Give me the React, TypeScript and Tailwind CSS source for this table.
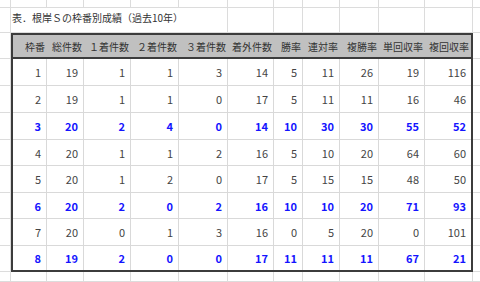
import React from 'react';

const HEADERS = ['枠番', '総件数', '１着件数', '２着件数', '３着件数', '着外件数', '勝率', '連対率', '複勝率', '単回収率', '複回収率'];

const ROWS: { values: number[]; hot: boolean }[] = [
  { values: [1, 19, 1, 1, 3, 14, 5, 11, 26, 19, 116], hot: false },
  { values: [2, 19, 1, 1, 0, 17, 5, 11, 11, 16, 46], hot: false },
  { values: [3, 20, 2, 4, 0, 14, 10, 30, 30, 55, 52], hot: true },
  { values: [4, 20, 1, 1, 2, 16, 5, 10, 20, 64, 60], hot: false },
  { values: [5, 20, 1, 2, 0, 17, 5, 15, 15, 48, 50], hot: false },
  { values: [6, 20, 2, 0, 2, 16, 10, 10, 20, 71, 93], hot: true },
  { values: [7, 20, 0, 1, 3, 16, 0, 5, 20, 0, 101], hot: false },
  { values: [8, 19, 2, 0, 0, 17, 11, 11, 11, 67, 21], hot: true },
];

const COLS = 13;
const GRID_ROWS = 12;

// sheet cells around the table (table covers rows 2..10, cols 1..11)
function SheetCells() {
  const cells: React.ReactElement[] = [];
  for (let r = 0; r < GRID_ROWS; r++) {
    for (let c = 0; c < COLS; c++) {
      if (r >= 2 && r <= 10 && c >= 1 && c <= 11) continue;
      const hideRight = (r === 1 && c >= 1 && c <= 4) || c === COLS - 1;
      const key = `${r}-${c}`;
      if (r === 1 && c === 1) {
        cells.push(
          <div key={key} className="relative flex items-center pb-[6px] pl-px border-b border-[#dcdcdc]">
            <span className="whitespace-nowrap text-[10px] text-[#333]">表．根岸Ｓの枠番別成績（過去10年）</span>
          </div>
        );
        continue;
      }
      cells.push(
        <div
          key={key}
          className={hideRight ? 'border-b border-[#dcdcdc]' : 'border-r border-b border-[#dcdcdc]'}
        />
      );
    }
  }
  return <>{cells}</>;
}

function ResultTable() {
  return (
    <div className="col-start-2 col-span-11 row-start-3 row-span-9 grid grid-cols-subgrid grid-rows-subgrid border-2 border-[#3c3c3c]">
      {HEADERS.map((h) => (
        <div
          key={h}
          className="flex items-center justify-end pr-[2px] bg-[#c0c0c0] border-b-2 border-[#3c3c3c] text-[10px] text-[#333] whitespace-nowrap"
        >
          {h}
        </div>
      ))}
      {ROWS.map((row, ri) =>
        row.values.map((v, ci) => {
          const last = ri === ROWS.length - 1;
          const lastCol = ci === row.values.length - 1;
          return (
            <div
              key={`${ri}-${ci}`}
              className={[
                'flex items-center justify-end pr-[5px] pt-px text-[11px] border-[#d9d9d9]',
                lastCol ? 'pr-[4px]' : 'border-r',
                last ? '' : 'border-b',
                row.hot ? 'font-bold text-[#1414ff]' : 'text-[#444]',
              ].join(' ')}
            >
              {v}
            </div>
          );
        })
      )}
    </div>
  );
}

export default function App() {
  return (
    <div className="w-[480px] h-[282px] overflow-hidden bg-white font-['Noto_Sans_CJK_JP',sans-serif]">
      <div className="grid h-full grid-cols-[11px_36px_37px_47px_48px_49px_46px_29px_37px_39px_46px_48px_1fr] grid-rows-[8px_25px_26px_27px_27px_27px_26px_27px_26px_27px_26px_1fr]">
        <ResultTable />
        <SheetCells />
      </div>
    </div>
  );
}
